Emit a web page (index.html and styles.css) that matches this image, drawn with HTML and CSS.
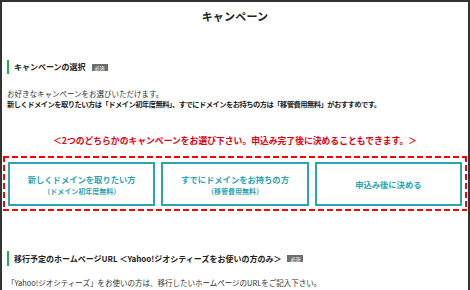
FILE: index.html
```html
<!DOCTYPE html>
<html lang="ja">
<head>
  <meta charset="UTF-8">
  <title>キャンペーン</title>
  <link rel="stylesheet" href="styles.css">
</head>
<body>
  <div class="page">
    <h1 class="title">キャンペーン</h1>

    <div class="section-head">
      <span class="section-title">キャンペーンの選択</span>
      <span class="badge">必須</span>
    </div>

    <p class="lead">お好きなキャンペーンをお選びいただけます。</p>
    <p class="lead-strong">新しくドメインを取りたい方は「ドメイン初年度無料」、すでにドメインをお持ちの方は「移管費用無料」がおすすめです。</p>

    <p class="notice">＜2つのどちらかのキャンペーンをお選び下さい。申込み完了後に決めることもできます。＞</p>

    <div class="choice-box">
      <div class="choice">
        <span class="choice-main">新しくドメインを取りたい方</span>
        <span class="choice-sub">（ドメイン初年度無料）</span>
      </div>
      <div class="choice">
        <span class="choice-main">すでにドメインをお持ちの方</span>
        <span class="choice-sub">（移管費用無料）</span>
      </div>
      <div class="choice">
        <span class="choice-main">申込み後に決める</span>
      </div>
    </div>

    <div class="section-head section-head-url">
      <span class="section-title">移行予定のホームページURL ＜Yahoo!ジオシティーズをお使いの方のみ＞</span>
      <span class="badge">必須</span>
    </div>

    <p class="lead lead-url">「Yahoo!ジオシティーズ」をお使いの方は、移行したいホームページのURLをご記入下さい。</p>
  </div>
</body>
</html>
```

FILE: styles.css
```css
body {
  margin: 0;
  padding: 0;
  background-color: #fff;
  font-family: 'Noto Sans CJK JP', 'Noto Sans', sans-serif;
  color: #333;
  overflow: hidden;
}

.page {
  width: 470px;
  height: 300px;
  box-sizing: border-box;
  border: 2px solid #333;
  border-bottom: none;
  padding: 0 5px;
}

.title {
  margin: 0;
  padding-top: 6px;
  font-size: 11px;
  line-height: 16px;
  font-weight: bold;
  text-align: center;
  color: #222;
  letter-spacing: 0.2px;
}

.section-head {
  display: flex;
  align-items: center;
  margin-top: 36px;
  border-left: 2px solid #1fb14a;
  padding-left: 5px;
  height: 14px;
}

.section-title {
  font-size: 8px;
  line-height: 14px;
  font-weight: bold;
  color: #222;
}

.badge {
  margin-left: 6px;
  width: 16px;
  height: 7px;
  background-color: #6d6d6d;
  color: #fff;
  font-size: 5px;
  line-height: 7px;
  text-align: center;
}

.lead {
  margin: 15px 0 0;
  font-size: 7.5px;
  line-height: 10px;
}

.lead-strong {
  margin: 0;
  font-size: 7.3px;
  line-height: 10px;
  font-weight: bold;
  color: #222;
  letter-spacing: -0.55px;
}

.notice {
  margin: 26px 0 0;
  font-size: 8.8px;
  line-height: 12px;
  font-weight: bold;
  color: #e60012;
  text-align: center;
}

.choice-box {
  margin: 9px -4px 0;
  padding: 4px 3px 3px;
  display: grid;
  grid-template-columns: 1fr 1fr 1fr;
  gap: 6px;
  background:
    repeating-linear-gradient(90deg, #f00 0 6px, transparent 6px 9px) left top / 100% 2px no-repeat,
    repeating-linear-gradient(90deg, #f00 0 6px, transparent 6px 9px) left bottom / 100% 2px no-repeat,
    repeating-linear-gradient(180deg, #f00 0 6px, transparent 6px 9px) left top / 2px 100% no-repeat,
    repeating-linear-gradient(180deg, #f00 0 6px, transparent 6px 9px) right top / 2px 100% no-repeat;
  border: 2px solid transparent;
  background-origin: border-box;
}

.choice {
  height: 44px;
  box-sizing: border-box;
  border: 2px solid #2ba5b0;
  background-color: #fff;
  display: flex;
  flex-direction: column;
  align-items: center;
  justify-content: center;
  color: #2ba5b0;
  font-weight: bold;
}

.choice-main {
  font-size: 8.3px;
  line-height: 12px;
}

.choice-sub {
  margin-top: 1px;
  font-size: 7px;
  line-height: 10px;
}

.section-head-url {
  margin-top: 40px;
  height: 15px;
}

.lead-url {
  margin-top: 12px;
}
```
